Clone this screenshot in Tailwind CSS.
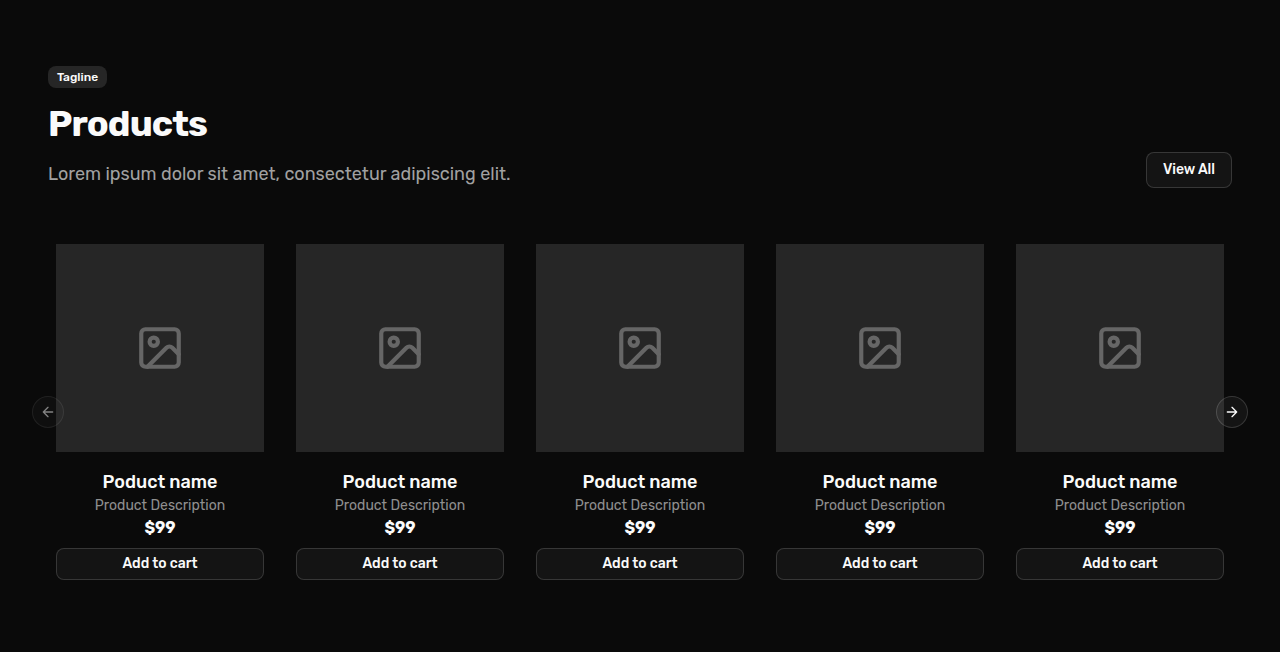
<!DOCTYPE html>
<html lang="en">
<head>
<meta charset="utf-8">
<title>Products</title>
<script src="https://cdn.jsdelivr.net/npm/@tailwindcss/browser@4"></script>
</head>
<body class="h-[652px] overflow-hidden bg-[#0a0a0a] font-[Rubik,Roboto,sans-serif] text-neutral-50">
<section class="px-12 pt-[66px]">
  <header class="flex items-end justify-between">
    <div class="flex flex-col items-start">
      <span class="flex h-[22px] w-[59px] items-center justify-center rounded-lg bg-[#262626] text-xs font-medium whitespace-nowrap">Tagline</span>
      <h2 class="mt-[14px] text-4xl leading-[44px] font-bold tracking-tight">Products</h2>
      <p class="mt-[14px] text-lg leading-7 text-[#a1a1a1]">Lorem ipsum dolor sit amet, consectetur adipiscing elit.</p>
    </div>
    <button class="flex h-9 w-[86px] items-center justify-center rounded-lg border border-white/15 bg-white/[0.045] pb-px text-sm font-medium whitespace-nowrap">View All</button>
  </header>
  <div class="relative mt-14 px-2">
    <div id="list" class="grid grid-cols-5 gap-8"></div>
    <button aria-label="Previous" class="absolute top-[152px] -left-4 flex size-8 items-center justify-center rounded-full border border-white/15 bg-white/[0.045] opacity-50">
      <svg class="size-4" viewBox="0 0 24 24" fill="none" stroke="currentColor" stroke-width="2" stroke-linecap="round" stroke-linejoin="round"><path d="m12 19-7-7 7-7M19 12H5"/></svg>
    </button>
    <button aria-label="Next" class="absolute top-[152px] -right-4 flex size-8 items-center justify-center rounded-full border border-white/15 bg-white/[0.045]">
      <svg class="size-4" viewBox="0 0 24 24" fill="none" stroke="currentColor" stroke-width="2" stroke-linecap="round" stroke-linejoin="round"><path d="M5 12h14M12 5l7 7-7 7"/></svg>
    </button>
  </div>
</section>
<template id="card">
  <article class="flex flex-col items-center">
    <div class="flex h-[208px] w-full items-center justify-center bg-[#262626] text-[#666666]">
      <svg class="size-[50px]" viewBox="0 0 24 24" fill="none" stroke="currentColor" stroke-width="2" stroke-linecap="round" stroke-linejoin="round"><rect x="3" y="3" width="18" height="18" rx="2"/><circle cx="9" cy="9" r="2"/><path d="m21 15-3.086-3.086a2 2 0 0 0-2.828 0L6 21"/></svg>
    </div>
    <h3 class="mt-4 text-lg leading-7 font-medium">Poduct name</h3>
    <p class="text-sm leading-5 text-[#8f8f8f]">Product Description</p>
    <p class="text-base leading-6 font-bold">$99</p>
    <button class="mt-2 flex h-8 w-full items-center justify-center rounded-lg border border-white/15 bg-white/[0.045] pb-px text-sm font-medium">Add to cart</button>
  </article>
</template>
<script>
  const list = document.getElementById('list');
  for (let i = 0; i < 5; i++) list.append(document.getElementById('card').content.cloneNode(true));
</script>
</body>
</html>
